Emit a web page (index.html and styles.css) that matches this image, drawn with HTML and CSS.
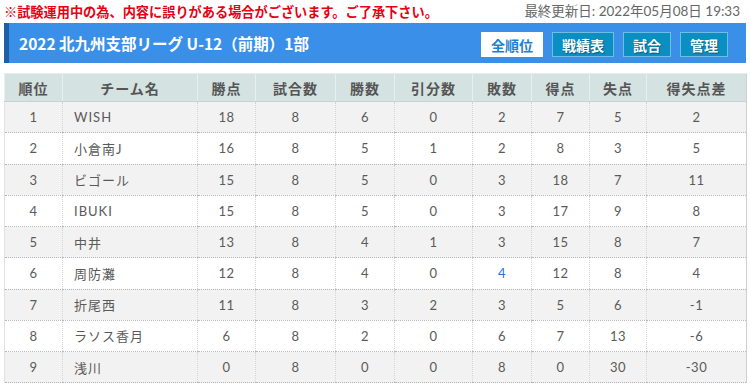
FILE: index.html
```html
<!DOCTYPE html>
<html lang="ja">
<head>
<meta charset="utf-8">
<link rel="stylesheet" href="styles.css">
</head>
<body>
<div class="page">
  <div class="topbar">
    <span class="notice">※試験運用中の為、内容に誤りがある場合がございます。ご了承下さい。</span>
    <span class="updated">最終更新日: 2022年05月08日 19:33</span>
  </div>
  <div class="league">
    <h1 class="title">2022 北九州支部リーグ U-12（前期）1部</h1>
    <div class="btns">
      <span class="btn btn-active">全順位</span>
      <span class="btn">戦績表</span>
      <span class="btn">試合</span>
      <span class="btn">管理</span>
    </div>
  </div>
  <table class="standings">
    <colgroup>
      <col class="c58"><col class="c135"><col class="c58"><col class="c80"><col class="c59"><col class="c78"><col class="c59"><col class="c58"><col class="c57"><col class="c100">
    </colgroup>
    <thead>
      <tr><th>順位</th><th>チーム名</th><th>勝点</th><th>試合数</th><th>勝数</th><th>引分数</th><th>敗数</th><th>得点</th><th>失点</th><th>得失点差</th></tr>
    </thead>
    <tbody>
      <tr><td>1</td><td class="name">WISH</td><td>18</td><td>8</td><td>6</td><td>0</td><td>2</td><td>7</td><td>5</td><td>2</td></tr>
      <tr><td>2</td><td class="name">小倉南J</td><td>16</td><td>8</td><td>5</td><td>1</td><td>2</td><td>8</td><td>3</td><td>5</td></tr>
      <tr><td>3</td><td class="name">ビゴール</td><td>15</td><td>8</td><td>5</td><td>0</td><td>3</td><td>18</td><td>7</td><td>11</td></tr>
      <tr><td>4</td><td class="name">IBUKI</td><td>15</td><td>8</td><td>5</td><td>0</td><td>3</td><td>17</td><td>9</td><td>8</td></tr>
      <tr><td>5</td><td class="name">中井</td><td>13</td><td>8</td><td>4</td><td>1</td><td>3</td><td>15</td><td>8</td><td>7</td></tr>
      <tr><td>6</td><td class="name">周防灘</td><td>12</td><td>8</td><td>4</td><td>0</td><td class="link">4</td><td>12</td><td>8</td><td>4</td></tr>
      <tr><td>7</td><td class="name">折尾西</td><td>11</td><td>8</td><td>3</td><td>2</td><td>3</td><td>5</td><td>6</td><td>-1</td></tr>
      <tr><td>8</td><td class="name">ラソス香月</td><td>6</td><td>8</td><td>2</td><td>0</td><td>6</td><td>7</td><td>13</td><td>-6</td></tr>
      <tr><td>9</td><td class="name">浅川</td><td>0</td><td>8</td><td>0</td><td>0</td><td>8</td><td>0</td><td>30</td><td>-30</td></tr>
    </tbody>
  </table>
</div>
</body>
</html>
```

FILE: styles.css
```css
html, body {
  margin: 0;
  padding: 0;
  background: #fff;
}
body {
  font-family: "Lato", "Noto Sans CJK JP", sans-serif;
  color: #555;
}
.page {
  padding: 0 4px;
}
.topbar {
  display: flex;
  justify-content: space-between;
  align-items: center;
  height: 23px;
  line-height: 23px;
}
.notice {
  color: #e60012;
  font-size: 13.2px;
  font-weight: bold;
  font-family: "Noto Sans CJK JP", sans-serif;
}
.updated {
  color: #666;
  font-size: 13.5px;
  padding-right: 6px;
}
.league {
  display: flex;
  align-items: center;
  justify-content: space-between;
  height: 40px;
  background: #3a90e8;
  border-left: 5px solid #1c5ea8;
  padding: 0 18px 0 10px;
  margin-bottom: 10px;
}
.title {
  margin: 0;
  color: #fff;
  font-size: 15.5px;
  font-weight: bold;
  font-family: "Noto Sans CJK JP", sans-serif;
}
.btns {
  display: flex;
  gap: 9px;
  margin-top: 3px;
}
.btn {
  display: flex;
  align-items: center;
  justify-content: center;
  box-sizing: border-box;
  height: 25px;
  padding: 0 9px;
  background: #0b8ec2;
  border: 1px solid #6cbfe0;
  color: #fff;
  font-size: 14px;
  font-weight: bold;
  font-family: "Noto Sans CJK JP", sans-serif;
  text-shadow: 1px 1px 1px rgba(0,0,0,0.35);
}
.btn-active {
  background: #fff;
  border-color: #fff;
  color: #1f7fd0;
  text-shadow: none;
}
.standings {
  width: 742px;
  table-layout: fixed;
  border-collapse: collapse;
  font-size: 13px;
  border-left: 1px solid #e2e2e2;
  border-right: 1px solid #cfcfcf;
}
.c58 { width: 58px; }
.c135 { width: 135px; }
.c80 { width: 80px; }
.c59 { width: 59px; }
.c78 { width: 78px; }
.c57 { width: 57px; }
.c100 { width: 100px; }
.standings th {
  background: #d5e2e2;
  color: #555;
  font-size: 14px;
  font-weight: 600;
  height: 27px;
  padding: 0;
  border-top: 1px solid #e6eded;
  border-bottom: 1px solid #c6d3d3;
  border-left: 1px solid #e8efef;
  letter-spacing: 1px;
}
.standings td {
  height: 30.25px;
  padding: 0;
  text-align: center;
  color: #5a5a5a;
  border-bottom: 1px dotted #b8b8b8;
  border-left: 1px dotted #d4d4d4;
  letter-spacing: 0.5px;
}
.standings tbody tr:nth-child(odd) td {
  background: #f2f2f2;
}
.standings tbody tr:nth-child(even) td {
  background: #fff;
}
.standings td.name {
  text-align: left;
  padding-left: 11px;
  letter-spacing: 1px;
}
.standings td.link {
  color: #2a6fd6;
}
```
